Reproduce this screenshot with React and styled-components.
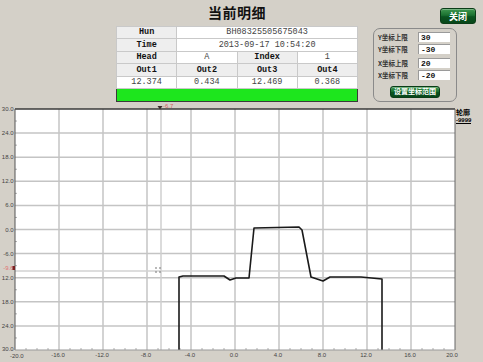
import React from 'react';
import styled, { createGlobalStyle } from 'styled-components';

const GlobalStyle = createGlobalStyle`
    html, body {
        margin: 0;
        padding: 0;
        background: #d4d0c8;
        overflow: hidden;
    }
`;

const Page = styled.div`
    width: 483px;
    height: 362px;
    background: #d4d0c8;
    display: flex;
    flex-direction: column;
    font-family: "Liberation Sans", "Noto Sans CJK SC", sans-serif;
`;

const Header = styled.div`
    height: 102px;
    display: flex;
    padding-left: 116px;
`;

const CenterCol = styled.div`
    width: 242px;
    display: flex;
    flex-direction: column;
`;

const Title = styled.div`
    height: 27px;
    line-height: 24px;
    text-align: center;
    font-family: "Noto Sans CJK SC", sans-serif;
    font-weight: 700;
    font-size: 14px;
    color: #111;
    letter-spacing: 0.5px;
`;

const Table = styled.table`
    width: 242px;
    border-collapse: collapse;
    border: 1px solid #555;
    table-layout: fixed;
    font-family: "Liberation Mono", "Noto Sans CJK SC", monospace;
    font-size: 8.5px;
`;

const Cell = styled.td`
    height: ${p => p.h || 12}px;
    padding: 0;
    text-align: center;
    border: 1px solid #c9c9c9;
    background: ${p => (p.label ? '#eeeeee' : '#ffffff')};
    color: ${p => (p.label ? '#111' : '#444')};
    font-weight: ${p => (p.label ? 700 : 400)};
    line-height: 1;
    white-space: nowrap;
`;

const GreenBar = styled.td`
    height: 12px;
    padding: 0;
    background: #1de61d;
    border: 1px solid #3a3a3a;
`;

const RightCol = styled.div`
    margin-left: 15px;
    width: 110px;
    display: flex;
    flex-direction: column;
`;

const CloseRow = styled.div`
    height: 28px;
    display: flex;
    justify-content: flex-end;
    align-items: flex-start;
    padding-right: 7px;
`;

const GreenButton = styled.button`
    width: ${p => p.w}px;
    height: ${p => p.h}px;
    margin-top: ${p => p.top || 0}px;
    padding: 0;
    border: 1px solid #0b3d18;
    border-radius: 3px;
    background: linear-gradient(#3f9850 0%, #1a7030 45%, #0a5520 55%, #08461a 100%);
    color: #fff;
    font-family: "Noto Sans CJK SC", sans-serif;
    font-weight: 700;
    font-size: ${p => p.fs}px;
    line-height: 1;
    white-space: nowrap;
    box-shadow: inset 0 1px 0 rgba(255, 255, 255, 0.3);
`;

const Panel = styled.div`
    width: 84px;
    height: 75px;
    box-sizing: border-box;
    border: 1px solid #8a8a8a;
    border-radius: 7px;
    padding: 3px 6px 0 4px;
    display: flex;
    flex-direction: column;
`;

const Field = styled.div`
    display: flex;
    align-items: center;
    height: 10px;
    margin-top: ${p => p.gap}px;
`;

const FieldLabel = styled.span`
    width: 40px;
    font-family: "Noto Sans CJK SC", sans-serif;
    font-size: 6.5px;
    font-weight: 700;
    color: #333;
    white-space: nowrap;
`;

const FieldInput = styled.div`
    width: 32px;
    height: 10px;
    box-sizing: border-box;
    background: #fff;
    border-top: 1px solid #9a9a9a;
    border-left: 1px solid #9a9a9a;
    font-family: "Liberation Mono", monospace;
    font-size: 8px;
    font-weight: 700;
    line-height: 9px;
    padding-left: 2px;
    color: #111;
`;

const ButtonRow = styled.div`
    display: flex;
    justify-content: center;
    margin-top: 6px;
    padding-left: 2px;
`;

const ChartSvg = styled.svg`
    display: block;
    width: 483px;
    height: 260px;
`;

const fields = [
    { label: 'Y坐标上限', value: '30', gap: 0 },
    { label: 'Y坐标下限', value: '-30', gap: 2 },
    { label: 'X坐标上限', value: '20', gap: 4 },
    { label: 'X坐标下限', value: '-20', gap: 2 },
];

// plot area, svg coords (page y - 102)
const L = 15, R = 455, T = 7, B = 248;
const X = v => 235 + v * 11;
const Y = v => 127.5 - v * 4.017;

const curve = [
    [179, 350], [179, 277], [183, 276], [224, 276], [230, 280], [236, 278], [249, 278],
    [254, 228], [299, 227], [302, 230], [311, 277], [317, 279], [323, 281], [330, 277],
    [361, 277], [382, 279], [382, 350],
].map(([x, y]) => `${x},${y - 102}`).join(' ');

const yLabels = [
    [30, '30.0'], [24, '24.0'], [18, '18.0'], [12, '12.0'], [6, '6.0'], [0, '0.0'],
    [-6, '-6.0'], [-12, '12.0'], [-18, '18.0'], [-24, '24.0'],
];

function Chart() {
    const vLines = [-16, -12, -8, -4, 0, 4, 8, 12, 16];
    const hLines = [-24, -18, -12, -6, 0, 6, 12, 18, 24];
    const minorX = [];
    for (let v = -19; v < 20; v++) if (v % 4 !== 0) minorX.push(v);
    const minorY = [];
    for (let v = -27; v < 30; v += 3) if (v % 6 !== 0) minorY.push(v);

    return (
        <ChartSvg viewBox="0 0 483 260">
            <rect x={L} y={T} width={R - L} height={B - T} fill="#fff"/>
            {vLines.map(v => (
                <line key={'v' + v} x1={X(v)} x2={X(v)} y1={T} y2={B} stroke="#c4c4c4" strokeWidth="1.5"/>
            ))}
            {hLines.map(v => (
                <line key={'h' + v} x1={L} x2={R} y1={Y(v)} y2={Y(v)} stroke="#c4c4c4" strokeWidth="1.5"/>
            ))}
            {/* cursor lines */}
            <line x1="161" x2="161" y1={T} y2={B} stroke="#cfcfcf" strokeWidth="1.5"/>
            <line x1={L} x2={R} y1="169" y2="169" stroke="#d2d2d2" strokeWidth="1.5"/>

            {minorX.map(v => (
                <line key={'mx' + v} x1={X(v)} x2={X(v)} y1={B - 2} y2={B} stroke="#999" strokeWidth="0.8"/>
            ))}
            {minorY.map(v => (
                <line key={'my' + v} x1={L} x2={L + 2} y1={Y(v)} y2={Y(v)} stroke="#999" strokeWidth="0.8"/>
            ))}

            <polyline points={curve} fill="none" stroke="#1a1a1a" strokeWidth="1.6" strokeLinejoin="round"/>

            {/* crosshair marker */}
            {[[156, 166], [160, 166], [156, 170], [160, 170]].map(([x, y]) => (
                <g key={x + '-' + y} stroke="#888" strokeWidth="0.7">
                    <line x1={x - 1} x2={x + 1} y1={y} y2={y}/>
                    <line x1={x} x2={x} y1={y - 1} y2={y + 1}/>
                </g>
            ))}

            {/* frame */}
            <line x1={L} x2={R} y1={T} y2={T} stroke="#3a3a3a" strokeWidth="1.5"/>
            <line x1={L} x2={L} y1={T} y2={B} stroke="#555" strokeWidth="1"/>
            <line x1={R} x2={R} y1={T} y2={B} stroke="#666" strokeWidth="1"/>
            <line x1={L} x2={R} y1={B} y2={B} stroke="#999" strokeWidth="1"/>

            {/* top cursor marker */}
            <path d="M157.5 4 L162.5 4 L160 7.5 Z" fill="#3a2a2a"/>
            <text x="163" y="6" fontSize="6" fill="#d06060" fontFamily="Liberation Sans, sans-serif">-6.7</text>

            <g fontSize="6" fill="#444" fontFamily="Liberation Sans, sans-serif">
                {yLabels.map(([v, t]) => (
                    <text key={'yl' + v} x="13.5" y={Y(v) + 2} textAnchor="end">{t}</text>
                ))}
                <text x="2" y={B + 1}>30.0</text>
                <text x="10" y={B + 7.5}>-20.0</text>
                {[-16, -12, -8, -4, 0, 4, 8, 12, 16].map(v => (
                    <text key={'xl' + v} x={X(v) - 1} y={B + 7} textAnchor="middle">{v.toFixed(1)}</text>
                ))}
                <text x="452" y={B + 7} textAnchor="middle">20.0</text>
            </g>
            <text x="13.5" y="168" textAnchor="end" fontSize="6" fill="#e07070" fontFamily="Liberation Sans, sans-serif">-9.6</text>
            <rect x="12.5" y="164" width="2.5" height="4" fill="#7a2020"/>

            {/* side legend */}
            <text x="456" y="13" fontSize="7" fontWeight="700" fill="#000" fontFamily="Noto Sans CJK SC, sans-serif">轮廓</text>
            <text x="456" y="20" fontSize="6" fontWeight="700" fill="#000" fontFamily="Liberation Sans, sans-serif">-9999</text>
            <line x1="456" x2="471" y1="21.5" y2="21.5" stroke="#000" strokeWidth="1"/>
        </ChartSvg>
    );
}

export default function App() {
    return (
        <Page>
            <GlobalStyle/>
            <Header>
                <CenterCol>
                    <Title>当前明细</Title>
                    <Table>
                        <tbody>
                        <tr>
                            <Cell label h={11}>Hun</Cell>
                            <Cell colSpan={3} h={11}>BH08325505675043</Cell>
                        </tr>
                        <tr>
                            <Cell label h={12}>Time</Cell>
                            <Cell colSpan={3} h={12}>2013-09-17 10:54:20</Cell>
                        </tr>
                        <tr>
                            <Cell label h={11}>Head</Cell>
                            <Cell h={11}>A</Cell>
                            <Cell label h={11}>Index</Cell>
                            <Cell h={11}>1</Cell>
                        </tr>
                        <tr>
                            <Cell label h={12}>Out1</Cell>
                            <Cell label h={12}>Out2</Cell>
                            <Cell label h={12}>Out3</Cell>
                            <Cell label h={12}>Out4</Cell>
                        </tr>
                        <tr>
                            <Cell h={11}>12.374</Cell>
                            <Cell h={11}>0.434</Cell>
                            <Cell h={11}>12.469</Cell>
                            <Cell h={11}>0.368</Cell>
                        </tr>
                        <tr>
                            <GreenBar colSpan={4}/>
                        </tr>
                        </tbody>
                    </Table>
                </CenterCol>
                <RightCol>
                    <CloseRow>
                        <GreenButton w={36} h={16} top={8} fs={9}>关闭</GreenButton>
                    </CloseRow>
                    <Panel>
                        {fields.map(f => (
                            <Field key={f.label} gap={f.gap}>
                                <FieldLabel>{f.label}</FieldLabel>
                                <FieldInput>{f.value}</FieldInput>
                            </Field>
                        ))}
                        <ButtonRow>
                            <GreenButton w={50} h={12} fs={7}>设置坐标范围</GreenButton>
                        </ButtonRow>
                    </Panel>
                </RightCol>
            </Header>
            <Chart/>
        </Page>
    );
}
